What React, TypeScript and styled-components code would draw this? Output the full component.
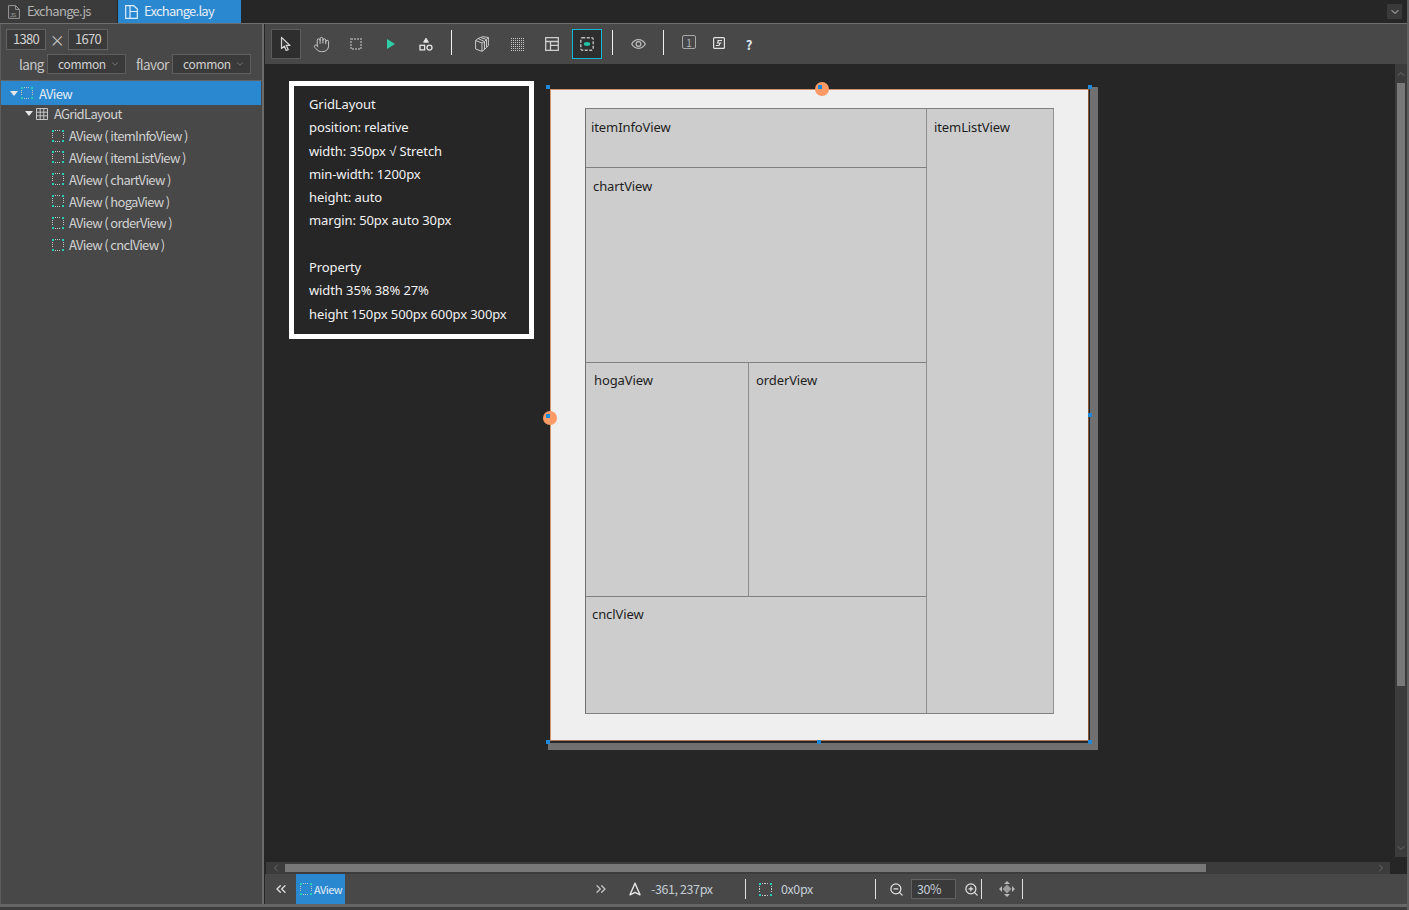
import React from "react";
import styled, { createGlobalStyle } from "styled-components";
import { ChevronDown, ChevronLeft, ChevronRight, ChevronUp, ChevronsLeft, ChevronsRight, Hand, ZoomIn, ZoomOut } from "lucide-react";

const UI_FONT = `"Noto Sans CJK KR", "Noto Sans", sans-serif`;

const GlobalStyle = createGlobalStyle`
  html, body {
    margin: 0;
    padding: 0;
    background: #262626;
    overflow: hidden;
  }
  * {
    box-sizing: border-box;
  }
`;

const TREE_ITEMS = ["itemInfoView", "itemListView", "chartView", "hogaView", "orderView", "cnclView"];

const NOTE_LINES = [
  "GridLayout",
  "position: relative",
  "width: 350px √ Stretch",
  "min-width: 1200px",
  "height: auto",
  "margin: 50px auto 30px",
  "",
  "Property",
  "width 35% 38% 27%",
  "height 150px 500px 600px 300px",
];

const DASH_STEPS = [3, 5, 7];

// dotted square with teal corners, used for every AView in the tree
const DashBox = ({ size = 12 }: { size?: number }) => (
  <svg width={size} height={size} viewBox="0 0 12 12" shapeRendering="crispEdges" style={{ flex: "none" }}>
    {DASH_STEPS.map((p) => (
      <g key={p} fill="#c4c4c4">
        <rect x={p} y="0" width="1" height="1" />
        <rect x={p} y="11" width="1" height="1" />
        <rect x="0" y={p} width="1" height="1" />
        <rect x="11" y={p} width="1" height="1" />
      </g>
    ))}
    <path d="M0 0h2v2H0zM10 0h2v2h-2zM0 10h2v2H0zM10 10h2v2h-2z" fill="#24cdb4" />
  </svg>
);

const GridIcon = () => (
  <svg width="12" height="12" viewBox="0 0 12 12" style={{ flex: "none" }}>
    <path d="M.5.5h11v11H.5zM4.2.5v11M7.8.5v11M.5 4.2h11M.5 7.8h11" fill="none" stroke="#c8c8c8" />
  </svg>
);

const ArrowIcon = () => (
  <svg width="14" height="16" viewBox="0 0 14 16">
    <path d="M2.5 1.5v11l2.8-2.4 1.9 4.4 2-.9-1.9-4.2h3.7z" fill="#3a3a3a" stroke="#d4d4d4" strokeWidth="1.2" strokeLinejoin="round" />
  </svg>
);

const PlainDash = () => (
  <svg width="12" height="12" viewBox="0 0 12 12">
    <rect x="1" y="1" width="10" height="10" fill="none" stroke="#8d8d8d" strokeWidth="2" strokeDasharray="2 1" />
  </svg>
);

const PlayIcon = () => (
  <svg width="8" height="10" viewBox="0 0 8 10">
    <path d="M0 0l8 5-8 5z" fill="#2ccfa8" />
  </svg>
);

const ShapesIcon = () => (
  <svg width="14" height="14" viewBox="0 0 14 14">
    <path d="M7 1.2l2.4 4H4.6z" fill="#e6e6e6" stroke="#e6e6e6" />
    <rect x="1" y="8.3" width="4.6" height="4.6" fill="none" stroke="#e6e6e6" strokeWidth="1.3" />
    <circle cx="10.5" cy="10.6" r="2.5" fill="none" stroke="#e6e6e6" strokeWidth="1.3" />
  </svg>
);

const LayersIcon = () => (
  <svg width="14" height="16" viewBox="0 0 14 16">
    <path
      d="M.6 4.5L7 7v8.300L.6 13zM7 7l2.500-1.500v8L7 15.300M9.500 5.500l2-2v8l-2 2M11.500 3.500l1.900-2v8l-1.900 2M.6 4.500L3 2.500l6.500 3M3 2.500l2.500-1 6 2M5.500 1.500L8 .7l5.400.8"
      fill="none"
      stroke="#c8c8c8"
      strokeWidth="1"
      strokeLinejoin="round"
    />
  </svg>
);

const DotsIcon = () => {
  const dots = [];
  for (let row = 0; row < 7; row++) {
    for (let col = 0; col < 7; col++) {
      dots.push(<rect key={`${row}-${col}`} x={col * 2} y={row * 2} width="1" height="1" fill="#c4c4c4" />);
    }
  }
  return (
    <svg width="13" height="13" viewBox="0 0 13 13">
      {dots}
    </svg>
  );
};

const LayoutIcon = () => (
  <svg width="14" height="14" viewBox="0 0 14 14">
    <path d="M.7.7h12.6v12.6H.7zM.7 4.5h12.6M5.500 4.500v8.800M5.500 8.400h7.800" fill="none" stroke="#cfcfcf" strokeWidth="1.3" />
  </svg>
);

const GuideIcon = () => (
  <svg width="14" height="14" viewBox="0 0 14 14">
    <rect x="0.8" y="0.8" width="12.4" height="12.4" rx="1.5" fill="none" stroke="#bdbdbd" strokeWidth="1.4" strokeDasharray="3 1.5" />
    <ellipse cx="7" cy="7" rx="3.2" ry="1.9" fill="#1fc4a5" />
  </svg>
);

const EyeIcon = () => (
  <svg width="15" height="10" viewBox="0 0 15 10">
    <path d="M.7 5C2.4 2 4.8.7 7.5.7S12.600 2 14.300 5c-1.700 3-4.100 4.300-6.800 4.300S2.400 8 .7 5z" fill="none" stroke="#bdbdbd" strokeWidth="1.200" />
    <circle cx="7.500" cy="5" r="2.400" fill="none" stroke="#bdbdbd" strokeWidth="1.200" />
  </svg>
);

const NotesIcon = () => (
  <svg width="12" height="12" viewBox="0 0 12 12" style={{ marginTop: -2 }}>
    <rect x="0.6" y="0.6" width="10.800" height="10.800" rx="1" fill="none" stroke="#e2e2e2" strokeWidth="1.200" />
    <path d="M4.500 3.500h4.500M5.500 3.500L4.500 6h4M7 6L6 8.500H2.800" fill="none" stroke="#e2e2e2" strokeWidth="1.100" />
  </svg>
);

const NavIcon = () => (
  <svg width="12" height="14" viewBox="0 0 12 14">
    <path d="M6 1.200L1 12.800 6 10.400l5 2.400z" fill="none" stroke="#e8e8e8" strokeWidth="1.400" strokeLinejoin="round" />
  </svg>
);

const MoveIcon = () => (
  <svg width="18" height="16" viewBox="0 0 18 16">
    <path d="M9 0l3 3H6zM9 16l3-3H6zM1 8l3-3v6zM17 8l-3-3v6z" fill="#b8b8b8" />
    <path d="M9 3.500L13.500 8 9 12.500 4.500 8z" fill="#c8c8c8" opacity="0.65" />
  </svg>
);

const JsFileIcon = () => (
  <svg width="12" height="14" viewBox="0 0 12 14">
    <path d="M.6.6h7l3.800 3.800v9H.6zM7.600.6v3.800h3.800" fill="none" stroke="#999" />
    <text x="2" y="11.500" fontSize="6" fill="#999" fontFamily="Liberation Sans, sans-serif">JS</text>
  </svg>
);

const LayFileIcon = () => (
  <svg width="13" height="14" viewBox="0 0 13 14">
    <path d="M.7.7h8l3.600 3.400v9.200H.7zM5 .7v12.600M5 6.500h7.300" fill="none" stroke="#dfeeff" strokeWidth="1.200" />
  </svg>
);

const App = () => {
  return (
    <>
      <GlobalStyle />
      <Window>
        <TabBar>
          <Tab>
            <JsFileIcon />
            Exchange.js
          </Tab>
          <Tab $active>
            <LayFileIcon />
            Exchange.lay
          </Tab>
          <TabMenuButton>
            <ChevronDown size={12} strokeWidth={2} />
          </TabMenuButton>
        </TabBar>

        <Body>
          <Sidebar>
            <SizeRow>
              <SizeInput>1380</SizeInput>
              <SizeCross>×</SizeCross>
              <SizeInput>1670</SizeInput>
            </SizeRow>
            <OptionRow>
              <OptionLabel $width={24}>lang</OptionLabel>
              <OptionSelect>
                common
                <ChevronDown size={10} strokeWidth={1.5} color="#9a9a9a" />
              </OptionSelect>
              <OptionLabel $width={32} $gap={10}>flavor</OptionLabel>
              <OptionSelect>
                common
                <ChevronDown size={10} strokeWidth={1.5} color="#9a9a9a" />
              </OptionSelect>
            </OptionRow>
            <RootRow>
              <Caret />
              <DashBox />
              AView
            </RootRow>
            <LayoutRow>
              <Caret />
              <GridIcon />
              AGridLayout
            </LayoutRow>
            {TREE_ITEMS.map((name) => (
              <LeafRow key={name}>
                <DashBox />
                AView ( {name} )
              </LeafRow>
            ))}
          </Sidebar>
          <Splitter />

          <Main>
            <Toolbar>
              <ToolButton $state="pressed"><ArrowIcon /></ToolButton>
              <ToolButton><Hand size={17} strokeWidth={1.3} color="#d0d0d0" /></ToolButton>
              <ToolButton><PlainDash /></ToolButton>
              <ToolButton><PlayIcon /></ToolButton>
              <ToolButton><ShapesIcon /></ToolButton>
              <ToolSeparator />
              <ToolButton><LayersIcon /></ToolButton>
              <ToolButton><DotsIcon /></ToolButton>
              <ToolButton><LayoutIcon /></ToolButton>
              <ToolButton $state="focused"><GuideIcon /></ToolButton>
              <ToolSeparator />
              <ToolButton $pull><EyeIcon /></ToolButton>
              <ToolSeparator />
              <ToolButton $pull><NumberBadge>1</NumberBadge></ToolButton>
              <ToolButton $pull><NotesIcon /></ToolButton>
              <ToolButton $pull><HelpMark>?</HelpMark></ToolButton>
            </Toolbar>

            <Stage>
              <Canvas>
                <NoteBox>
                  {NOTE_LINES.map((line, i) => (
                    <NoteLine key={i}>{line}</NoteLine>
                  ))}
                </NoteBox>

                <Sheet>
                  <GridLayout>
                    <Cell $col="1 / 3" $row="1" $padLeft={5} $padTop={8}>itemInfoView</Cell>
                    <Cell $col="3" $row="1 / 5" $padLeft={7} $padTop={8} $noRight $noBottom>itemListView</Cell>
                    <Cell $col="1 / 3" $row="2" $padLeft={7} $padTop={8}>chartView</Cell>
                    <Cell $col="1" $row="3" $padLeft={8} $padTop={7}>hogaView</Cell>
                    <Cell $col="2" $row="3" $padLeft={7} $padTop={7}>orderView</Cell>
                    <Cell $col="1 / 3" $row="4" $padLeft={6} $padTop={7} $noBottom>cnclView</Cell>
                  </GridLayout>
                  <StripRight />
                  <StripBottom />
                  <Handle $x={-5} $y={-5} />
                  <Handle $x={537} $y={-5} />
                  <Handle $x={-5} $y={650} />
                  <Handle $x={266} $y={650} />
                  <Handle $x={537} $y={650} />
                  <Handle $x={537} $y={323} />
                  <Pin $x={264} $y={-8}><PinDot /></Pin>
                  <Pin $x={-8} $y={321}><PinDot /></Pin>
                </Sheet>

                <VScroll>
                  <ScrollArrow><ChevronUp size={12} strokeWidth={2} color="#6a6a6a" /></ScrollArrow>
                  <VThumb />
                  <ScrollArrow><ChevronDown size={12} strokeWidth={2} color="#6a6a6a" /></ScrollArrow>
                </VScroll>
              </Canvas>
              <HScrollRow>
                <HScroll>
                  <ScrollArrow><ChevronLeft size={12} strokeWidth={2} color="#6a6a6a" /></ScrollArrow>
                  <HThumb />
                  <ScrollArrow><ChevronRight size={12} strokeWidth={2} color="#6a6a6a" /></ScrollArrow>
                </HScroll>
              </HScrollRow>
            </Stage>

            <StatusBar>
              <StatusChevron $left={8}><ChevronsLeft size={16} strokeWidth={2} color="#dcdcdc" /></StatusChevron>
              <ViewTab>
                <DashBox />
                AView
              </ViewTab>
              <StatusChevron $left={248}><ChevronsRight size={16} strokeWidth={2} color="#c4c4c4" /></StatusChevron>
              <StatusIcon $left={20}><NavIcon /></StatusIcon>
              <StatusText $left={10} $width={62}>-361, 237px</StatusText>
              <StatusSeparator $left={32} />
              <StatusIcon $left={13}><DashBox size={13} /></StatusIcon>
              <StatusText $left={9} $width={32}>0x0px</StatusText>
              <StatusSeparator $left={62} />
              <StatusIcon $left={13}><ZoomOut size={15} strokeWidth={2} color="#e2e2e2" /></StatusIcon>
              <ZoomInput>30%</ZoomInput>
              <StatusIcon $left={8}><ZoomIn size={15} strokeWidth={2} color="#e2e2e2" /></StatusIcon>
              <StatusSeparator $left={2} />
              <StatusIcon $left={16}><MoveIcon /></StatusIcon>
              <StatusSeparator $left={6} />
            </StatusBar>
          </Main>
        </Body>

        <FooterLine />
      </Window>
    </>
  );
};

const Window = styled.div`
  width: 1409px;
  height: 910px;
  display: flex;
  flex-direction: column;
  background: #262626;
  border-right: 2px solid #5f5f5f;
  font-family: ${UI_FONT};
  font-size: 13px;
  color: #d2d2d2;
  letter-spacing: -0.68px;
  overflow: hidden;
`;

const TabBar = styled.div`
  height: 24px;
  flex: none;
  display: flex;
  align-items: stretch;
  background: #262626;
  border-bottom: 1px solid #6e6e6e;
`;

const Tab = styled.div<{ $active?: boolean }>`
  width: ${(p) => (p.$active ? "123px" : "117px")};
  margin-right: ${(p) => (p.$active ? "0" : "1px")};
  padding-left: ${(p) => (p.$active ? "7px" : "8px")};
  padding-bottom: 2px;
  display: flex;
  align-items: center;
  gap: ${(p) => (p.$active ? "6px" : "7px")};
  background: ${(p) => (p.$active ? "#2a88d0" : "#3b3b3b")};
  color: ${(p) => (p.$active ? "#e8eef4" : "#b4b4b4")};
  letter-spacing: ${(p) => (p.$active ? "-0.75px" : "-0.68px")};

  & > svg {
    margin-top: 2px;
  }
`;

const TabMenuButton = styled.div`
  width: 15px;
  height: 15px;
  margin: 4px 5px 0 auto;
  display: flex;
  align-items: center;
  justify-content: center;
  background: #3a3a3a;
  color: #d0d0d0;
`;

const Body = styled.div`
  flex: 1;
  min-height: 0;
  display: flex;
`;

const Sidebar = styled.div`
  width: 262px;
  flex: none;
  background: #484848;
  border-left: 1px solid #5c5c5c;
`;

const SizeRow = styled.div`
  height: 30px;
  padding: 5px 0 0 5px;
  display: flex;
  align-items: flex-start;
`;

const SizeInput = styled.div`
  width: 40px;
  height: 21px;
  padding-bottom: 2px;
  display: flex;
  align-items: center;
  justify-content: center;
  background: #3a3a3a;
  border: 1px solid #626262;
`;

const SizeCross = styled.div`
  width: 22px;
  height: 21px;
  display: flex;
  align-items: center;
  justify-content: center;
  font-size: 15px;
  color: #c8c8c8;
`;

const OptionRow = styled.div`
  height: 27px;
  padding-left: 18px;
  display: flex;
  align-items: flex-start;
  border-bottom: 1px solid #646464;
`;

const OptionLabel = styled.div<{ $width: number; $gap?: number }>`
  width: ${(p) => p.$width}px;
  margin-left: ${(p) => p.$gap ?? 0}px;
  margin-right: 4px;
  font-size: 13.500px;
  line-height: 20px;
  letter-spacing: -0.6px;
  color: #c6c6c6;
  white-space: nowrap;
`;

const OptionSelect = styled.div`
  width: 79px;
  height: 20px;
  padding: 0 5px 2px 10px;
  display: flex;
  align-items: center;
  justify-content: space-between;
  background: #3a3a3a;
  border: 1px solid #5e5e5e;
  font-size: 12px;
  letter-spacing: -0.35px;

  & > svg {
    margin-top: 2px;
  }
`;

const TreeRow = styled.div`
  height: 21.8px;
  display: flex;
  align-items: center;
  white-space: nowrap;
`;

const RootRow = styled(TreeRow)`
  height: 24px;
  margin-right: 1px;
  padding-left: 9px;
  gap: 3px;
  background: #2a88d0;
  color: #e4ecf4;

  & > svg {
    margin-right: 3px;
  }
`;

const LayoutRow = styled(TreeRow)`
  margin-top: -2px;
  padding-left: 24px;
  gap: 3px;

  & > svg {
    margin-right: 3px;
  }
`;

const LeafRow = styled(TreeRow)`
  padding-left: 51px;
  gap: 5px;
`;

const Caret = styled.span`
  width: 0;
  height: 0;
  border-left: 4.500px solid transparent;
  border-right: 4.500px solid transparent;
  border-top: 5px solid #e6e6e6;
`;

const Splitter = styled.div`
  width: 3px;
  flex: none;
  border-left: 2px solid #6a6a6a;
  background: #262626;
`;

const Main = styled.div`
  flex: 1;
  min-width: 0;
  display: flex;
  flex-direction: column;
`;

const Toolbar = styled.div`
  height: 40px;
  flex: none;
  padding: 5px 0 0 6px;
  display: flex;
  align-items: flex-start;
  gap: 5px;
  background: #484848;
`;

const ToolButton = styled.div<{ $state?: "pressed" | "focused"; $pull?: boolean }>`
  width: 30px;
  height: 30px;
  flex: none;
  margin-left: ${(p) => (p.$pull ? "-5px" : "0")};
  display: flex;
  align-items: center;
  justify-content: center;
  background: ${(p) => (p.$state ? "#2e2e2e" : "transparent")};
  border: 1px solid
    ${(p) => (p.$state === "pressed" ? "#5c5c5c" : p.$state === "focused" ? "#16b6d6" : "transparent")};
`;

const ToolSeparator = styled.div`
  width: 1px;
  height: 25px;
  flex: none;
  margin: 1px 10px 0 5px;
  background: #efefef;
`;

const NumberBadge = styled.div`
  width: 14px;
  height: 14px;
  margin-top: -4px;
  display: flex;
  align-items: center;
  justify-content: center;
  border: 1px solid #a8a8a8;
  border-radius: 2px;
  font-size: 10px;
  letter-spacing: 0;
  color: #b8b8b8;
`;

const HelpMark = styled.div`
  font-size: 13px;
  font-weight: 700;
  letter-spacing: 0;
  color: #dfe6ee;
`;

const Stage = styled.div`
  flex: 1;
  min-height: 0;
  display: flex;
  flex-direction: column;
`;

const Canvas = styled.div`
  position: relative;
  flex: 1;
  min-height: 0;
  background: #262626;
  overflow: hidden;
`;

const NoteBox = styled.div`
  position: absolute;
  left: 24px;
  top: 17px;
  width: 245px;
  height: 258px;
  padding: 7px 0 0 15px;
  background: #262626;
  border: 5px solid #ffffff;
  font-family: "Noto Sans", sans-serif;
  font-size: 13px;
  letter-spacing: -0.1px;
  color: #f2f2f2;
`;

const NoteLine = styled.div`
  height: 23.3px;
  line-height: 23.3px;
  white-space: nowrap;
`;

const Sheet = styled.div`
  position: absolute;
  left: 285px;
  top: 25px;
  width: 539px;
  height: 652px;
  padding: 18px 0 0 34px;
  background: #efefef;
  border: 1px solid #d2946c;
  border-right-color: #8a5a3a;
  border-bottom-color: #a8775a;
`;

const GridLayout = styled.div`
  width: 469px;
  height: 606px;
  display: grid;
  grid-template-columns: 163px 178px 126px;
  grid-template-rows: 59px 195px 234px 116px;
  background: #cdcdcd;
  border-top: 1px solid #808080;
  border-left: 1px solid #707070;
  border-bottom: 1px solid #808080;
  border-right: 1px solid #909090;
  font-family: "Noto Sans", sans-serif;
  font-size: 13px;
  letter-spacing: -0.1px;
  color: #1e1e1e;
`;

const Cell = styled.div<{
  $col: string;
  $row: string;
  $padLeft: number;
  $padTop: number;
  $noRight?: boolean;
  $noBottom?: boolean;
}>`
  grid-column: ${(p) => p.$col};
  grid-row: ${(p) => p.$row};
  padding: ${(p) => p.$padTop}px 0 0 ${(p) => p.$padLeft}px;
  border-right: ${(p) => (p.$noRight ? "none" : "1px solid #8c8c8c")};
  border-bottom: ${(p) => (p.$noBottom ? "none" : "1px solid #808080")};
  line-height: 20px;
`;

const StripRight = styled.div`
  position: absolute;
  left: 539px;
  top: -3px;
  width: 8px;
  height: 663px;
  background: #707070;
`;

const StripBottom = styled.div`
  position: absolute;
  left: -3px;
  top: 653px;
  width: 550px;
  height: 7px;
  background: #707070;
`;

const Handle = styled.div<{ $x: number; $y: number }>`
  position: absolute;
  left: ${(p) => p.$x}px;
  top: ${(p) => p.$y}px;
  width: 4px;
  height: 4px;
  background: #2088d8;
`;

const Pin = styled.div<{ $x: number; $y: number }>`
  position: absolute;
  left: ${(p) => p.$x}px;
  top: ${(p) => p.$y}px;
  width: 14px;
  height: 14px;
  border-radius: 50%;
  background: #ff9966;
`;

const PinDot = styled.div`
  width: 4px;
  height: 4px;
  margin: 3px 0 0 3px;
  background: #2088d8;
`;

const VScroll = styled.div`
  position: absolute;
  right: 0;
  top: 0;
  bottom: 5px;
  width: 12px;
  display: flex;
  flex-direction: column;
  align-items: center;
  background: #3c3c3c;
`;

const ScrollArrow = styled.div`
  height: 19px;
  width: 19px;
  flex: none;
  display: flex;
  align-items: center;
  justify-content: center;
`;

const VThumb = styled.div`
  width: 8px;
  height: 603px;
  flex: none;
  margin-bottom: auto;
  background: #787878;
`;

const HScrollRow = styled.div`
  height: 12px;
  flex: none;
  padding-left: 1px;
  background: #262626;
`;

const HScroll = styled.div`
  width: 1124px;
  height: 12px;
  display: flex;
  align-items: center;
  background: #3c3c3c;
`;

const HThumb = styled.div`
  width: 921px;
  height: 8px;
  flex: none;
  margin-right: auto;
  background: #787878;
`;

const StatusBar = styled.div`
  height: 30px;
  flex: none;
  display: flex;
  align-items: center;
  background: #484848;
  font-size: 12.500px;
  letter-spacing: -0.4px;
  color: #c4ccd4;
`;

const StatusChevron = styled.div<{ $left: number }>`
  width: 16px;
  flex: none;
  margin-left: ${(p) => p.$left}px;
  display: flex;
  justify-content: center;
`;

const ViewTab = styled.div`
  width: 49px;
  height: 30px;
  flex: none;
  margin-left: 7px;
  padding-left: 4px;
  display: flex;
  align-items: center;
  gap: 2px;
  background: #2a88d0;
  font-size: 11px;
  letter-spacing: -0.55px;
  color: #e4ecf4;
`;

const StatusIcon = styled.div<{ $left: number }>`
  flex: none;
  margin-left: ${(p) => p.$left}px;
  display: flex;
  align-items: center;
`;

const StatusText = styled.div<{ $left: number; $width: number }>`
  width: ${(p) => p.$width}px;
  flex: none;
  margin-left: ${(p) => p.$left}px;
  padding-bottom: 2px;
  white-space: nowrap;
`;

const StatusSeparator = styled.div<{ $left: number }>`
  width: 1px;
  height: 20px;
  flex: none;
  margin-left: ${(p) => p.$left}px;
  background: #e0e0e0;
`;

const ZoomInput = styled.div`
  width: 45px;
  height: 20px;
  flex: none;
  margin-left: 7px;
  padding: 0 0 2px 5px;
  display: flex;
  align-items: center;
  background: #3a3a3a;
  border: 1px solid #626262;
`;

const FooterLine = styled.div`
  height: 6px;
  flex: none;
  background: #3c3c3c;
  border-top: 3px solid #666666;
`;

export default App;
